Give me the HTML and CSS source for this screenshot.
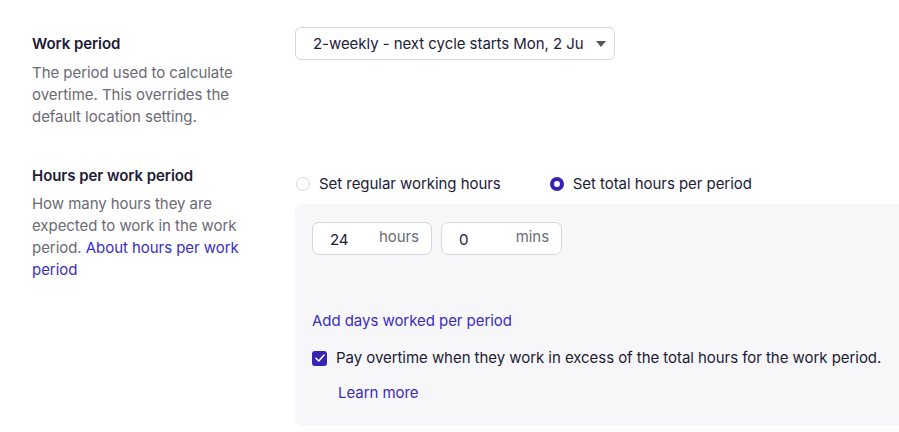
FILE: index.html
```html
<!DOCTYPE html>
<html>
<head>
<meta charset="utf-8">
<link rel="stylesheet" href="styles.css">
</head>
<body>
<div class="page">
  <div class="row row-period">
    <div class="info">
      <div class="title">Work period</div>
      <div class="desc">The period used to calculate overtime. This overrides the default location setting.</div>
    </div>
    <div class="control">
      <div class="select">
        <span class="select-text">2-weekly - next cycle starts Mon, 2 Jun 2025</span>
        <svg class="caret" width="10" height="6" viewBox="0 0 10 6"><path d="M0 0 H10 L5 6 Z" fill="#55555e"/></svg>
      </div>
    </div>
  </div>
  <div class="row row-hours">
    <div class="info">
      <div class="title">Hours per work period</div>
      <div class="desc">How many hours they are expected to work in the work period. <a class="link">About hours per work period</a></div>
    </div>
    <div class="control">
      <div class="radios">
        <label class="radio"><span class="dot"></span>Set regular working hours</label>
        <label class="radio checked"><span class="dot"></span>Set total hours per period</label>
      </div>
      <div class="panel">
        <div class="inputs">
          <div class="field f-hours"><span class="val">24</span><span class="unit">hours</span></div>
          <div class="field f-mins"><span class="val">0</span><span class="unit">mins</span></div>
        </div>
        <a class="link add">Add days worked per period</a>
        <div class="check-row">
          <span class="box"><svg width="10" height="8" viewBox="0 0 10 8"><path d="M1 4.2 L3.8 7 L9 1" fill="none" stroke="#fff" stroke-width="1.5" stroke-linecap="round" stroke-linejoin="round"/></svg></span>
          <span class="check-text">Pay overtime when they work in excess of the total hours for the work period.</span>
        </div>
        <a class="link learn">Learn more</a>
      </div>
    </div>
  </div>
</div>
</body>
</html>
```

FILE: styles.css
```css
html, body {
  margin: 0;
  padding: 0;
  background: #ffffff;
  overflow: hidden;
}
body {
  font-family: Inter, "Noto Sans", sans-serif;
  font-size: 15px;
  line-height: 22px;
  color: #1d1b36;
  letter-spacing: -0.05px;
}
.page {
  padding: 27px 0 0 32px;
  width: 940px;
}
.row {
  display: grid;
  grid-template-columns: 263px 1fr;
}
.row-period {
  height: 137px;
}
.info {
  width: 212px;
  padding-top: 6px;
}
.row-hours .info {
  padding-top: 1px;
}
.title {
  font-weight: 600;
  color: #1d1b36;
}
.desc {
  margin-top: 7px;
  color: #6b6a75;
}
.row-hours .desc {
  margin-top: 6px;
}
.link {
  color: #3a2ec0;
  text-decoration: none;
}
.select {
  width: 318px;
  height: 31px;
  border: 1px solid #d6d6dc;
  border-radius: 6px;
  display: flex;
  align-items: center;
  box-sizing: content-box;
}
.select-text {
  margin-left: 17px;
  width: 270px;
  white-space: nowrap;
  overflow: hidden;
  color: #1d1b36;
}
.caret {
  margin-left: 13px;
}
.radios {
  display: flex;
  gap: 48px;
  margin-top: 9px;
  height: 22px;
  align-items: center;
}
.radio {
  display: flex;
  align-items: center;
  color: #1d1b36;
}
.dot {
  width: 14px;
  height: 14px;
  border-radius: 50%;
  border: 1px solid #d8d8de;
  box-sizing: border-box;
  margin: 0 9px 0 1px;
  background: #fff;
}
.radio.checked .dot {
  border: 4.5px solid #3525b0;
  background: #fff;
}
.panel {
  margin-top: 9px;
  width: 640px;
  background: #f7f7f9;
  border-radius: 8px;
  padding: 18px 17px 23px;
  box-sizing: border-box;
  height: 222px;
}
.inputs {
  display: flex;
  gap: 9px;
}
.field {
  height: 31px;
  border: 1px solid #d6d6dc;
  border-radius: 7px;
  background: #fff;
  display: flex;
  align-items: center;
  padding: 0 12px 0 17px;
  justify-content: space-between;
  box-sizing: content-box;
}
.f-hours { width: 89px; }
.f-mins { width: 90px; }
.val {
  color: #1d1b36;
  margin-top: 3px;
}
.unit {
  color: #6b6a75;
  margin-top: -3px;
}
.add {
  display: block;
  margin-top: 55px;
}
.check-row {
  display: flex;
  align-items: center;
  margin-top: 15px;
}
.box {
  width: 15px;
  height: 15px;
  border-radius: 3px;
  background: #3525b0;
  display: flex;
  align-items: center;
  justify-content: center;
  margin-right: 9px;
}
.check-text {
  color: #1d1b36;
}
.learn {
  display: block;
  margin-top: 13px;
  margin-left: 26px;
}
```
